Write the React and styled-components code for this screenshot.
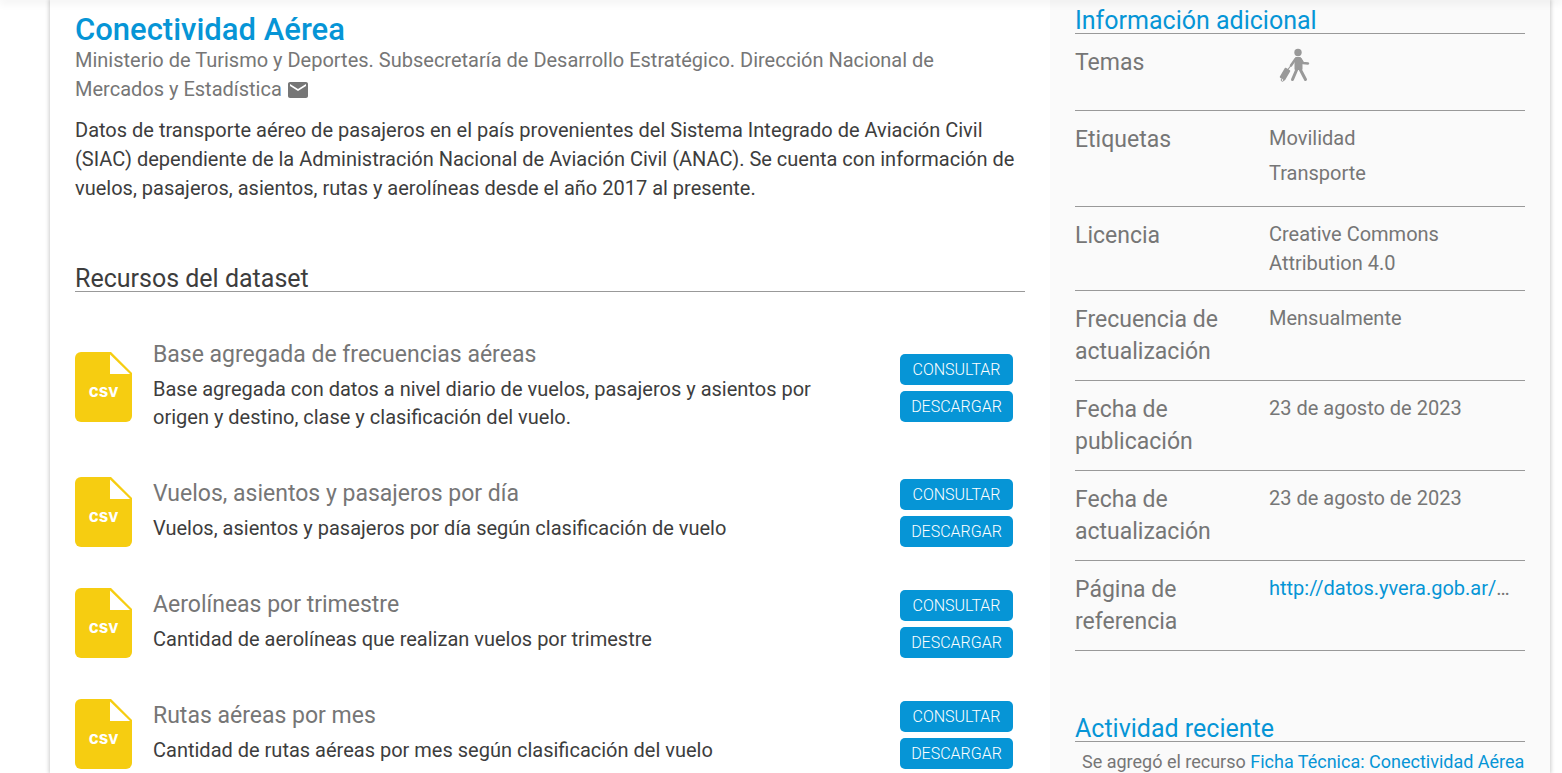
import React from "react";
import styled, { createGlobalStyle } from "styled-components";
import { MdEmail } from "react-icons/md";

const blue = "#0695d6";
const grey = "#767676";

const GlobalStyle = createGlobalStyle`
  * { box-sizing: border-box; }
  body {
    margin: 0;
    background: #fff;
    color: #3d3d3d;
    font: 400 20px/29px Roboto, "Liberation Sans", sans-serif;
    overflow-x: hidden;
  }
  h1, h2, h3, p, ul, dl, dd, dt { margin: 0; padding: 0; font-weight: 400; }
  ul { list-style: none; }
  a { color: ${blue}; text-decoration: none; }
`;

const TopBar = styled.header`
  position: relative;
  z-index: 1;
  height: 0;
  box-shadow: 0 0 10px 1px rgba(0, 0, 0, 0.2);
`;

const Page = styled.div`
  display: grid;
  grid-template-columns: minmax(0, 2fr) minmax(0, 1fr);
  margin: 0 12px 0 50px;
  height: 100vh;
  overflow: hidden;
  box-shadow: 0 0 4px 1px rgba(0, 0, 0, 0.2);
`;

const Main = styled.main`
  padding: 14px 25px 0;
`;

const Title = styled.h1`
  color: ${blue};
  font-size: 31px;
  font-weight: 500;
  line-height: 32px;
`;

const Publisher = styled.p`
  color: ${grey};
`;

const MailLink = styled.a`
  display: inline-flex;
  vertical-align: middle;
  margin-left: 4px;
  padding-bottom: 2px;
  color: ${grey};
`;

const Description = styled.p`
  margin-top: 12px;
  padding-right: 6px;
  margin-right: -6px;
`;

const SectionTitle = styled.h2`
  border-bottom: 1px solid #999;
  color: ${(p) => (p.$accent ? blue : "inherit")};
  font-size: 25px;
  line-height: 24px;
  margin-top: ${(p) => p.$gap || 0}px;
`;

const Resources = styled.ul`
  margin-top: 26px;
`;

const Resource = styled.li`
  display: flex;
  align-items: center;
`;

const FileIcon = styled.svg`
  display: block;
  flex: none;
  width: 57px;
  height: 70px;
  margin-bottom: 2px;
`;

const ResourceText = styled.div`
  flex: 1;
  padding: 21px 60px 26px 21px;
  line-height: 28px;
`;

const ResourceTitle = styled.h3`
  color: ${grey};
  font-size: 23px;
  line-height: 32px;
  margin-bottom: 4px;
`;

const Actions = styled.div`
  display: grid;
  gap: 6px;
  width: 113px;
  margin-right: 12px;
`;

const Action = styled.button`
  height: 31px;
  padding: 0;
  border: 0;
  border-radius: 5px;
  background: ${blue};
  color: #fff;
  font: 300 16px/31px Roboto, "Liberation Sans", sans-serif;
  text-transform: uppercase;
`;

const Sidebar = styled.aside`
  padding: 9px 25px 0;
  background: #fafafa;
`;

const InfoRow = styled.div`
  display: grid;
  grid-template-columns: 194px minmax(0, 1fr);
  padding: 13px 0 12px;
  border-bottom: 1px solid #999;
  color: ${grey};
`;

const Label = styled.dt`
  font-size: 23px;
  line-height: 32px;
  padding-right: 30px;
`;

const Value = styled.dd`
  padding-right: 6px;
`;

const Tag = styled.li`
  margin-bottom: 6px;
`;

const ThemeIcon = styled.svg`
  display: block;
  width: 50px;
  height: 51px;
`;

const Activity = styled.p`
  padding: 5px 0 5px 7px;
  color: ${grey};
  font-size: 18px;
`;

const resources = [
  ["Base agregada de frecuencias aéreas", "Base agregada con datos a nivel diario de vuelos, pasajeros y asientos por origen y destino, clase y clasificación del vuelo."],
  ["Vuelos, asientos y pasajeros por día", "Vuelos, asientos y pasajeros por día según clasificación de vuelo"],
  ["Aerolíneas por trimestre", "Cantidad de aerolíneas que realizan vuelos por trimestre"],
  ["Rutas aéreas por mes", "Cantidad de rutas aéreas por mes según clasificación del vuelo"],
];

function CsvIcon() {
  return (
    <FileIcon viewBox="0 0 57 70">
      <path d="M6 0H36L57 21V64a6 6 0 0 1-6 6H6a6 6 0 0 1-6-6V6a6 6 0 0 1 6-6Z" fill="#f6cd11" />
      <path d="M35 2.5V22H55Z" fill="#fff" />
      <text x="28.5" y="45" textAnchor="middle" fill="#fff" fontFamily="Inter, sans-serif" fontWeight="700" fontSize="17">csv</text>
    </FileIcon>
  );
}

function TravelerIcon() {
  return (
    <ThemeIcon viewBox="0 0 50 51" fill="none" stroke="#999" strokeLinecap="round" strokeLinejoin="round">
      <circle cx="29" cy="5.5" r="3.7" fill="#999" stroke="none" />
      <path d="M27 11h4l1.500 3v8h-6v-8z" fill="#999" strokeWidth="2" />
      <path d="M26.500 12L22 18.500M31.500 12l2.500 4 5 .500" strokeWidth="2.500" />
      <path d="M28 22L23.500 32.500M31 22l5.500 10.500" strokeWidth="3" />
      <path d="M22 18.500L18.500 23" strokeWidth="1.200" />
      <path d="M16.500 21.500l4 2.500-5 8.500-4-2.500z" fill="#999" strokeWidth="1.500" />
      <circle cx="13.500" cy="33" r="1.300" fill="#fafafa" strokeWidth="1" />
    </ThemeIcon>
  );
}

function Info({ label, children }) {
  return (
    <InfoRow>
      <Label>{label}</Label>
      <Value>{children}</Value>
    </InfoRow>
  );
}

export default function App() {
  return (
    <>
      <GlobalStyle />
      <TopBar />
      <Page>
        <Main>
          <Title>Conectividad Aérea</Title>
          <Publisher>
            Ministerio de Turismo y Deportes. Subsecretaría de Desarrollo Estratégico. Dirección Nacional de Mercados y Estadística
            <MailLink href="#contacto" aria-label="Contacto"><MdEmail size={24} /></MailLink>
          </Publisher>
          <Description>
            Datos de transporte aéreo de pasajeros en el país provenientes del Sistema Integrado de Aviación Civil (SIAC) dependiente de la Administración Nacional de Aviación Civil (ANAC). Se cuenta con información de vuelos, pasajeros, asientos, rutas y aerolíneas desde el año 2017 al presente.
          </Description>
          <SectionTitle $gap={64}>Recursos del dataset</SectionTitle>
          <Resources>
            {resources.map(([title, text]) => (
              <Resource key={title}>
                <CsvIcon />
                <ResourceText>
                  <ResourceTitle>{title}</ResourceTitle>
                  <p>{text}</p>
                </ResourceText>
                <Actions>
                  <Action>Consultar</Action>
                  <Action>Descargar</Action>
                </Actions>
              </Resource>
            ))}
          </Resources>
        </Main>
        <Sidebar>
          <SectionTitle $accent>Información adicional</SectionTitle>
          <dl>
            <Info label="Temas"><TravelerIcon /></Info>
            <Info label="Etiquetas">
              <ul>
                <Tag>Movilidad</Tag>
                <Tag>Transporte</Tag>
              </ul>
            </Info>
            <Info label="Licencia">Creative Commons Attribution 4.0</Info>
            <Info label="Frecuencia de actualización">Mensualmente</Info>
            <Info label="Fecha de publicación">23 de agosto de 2023</Info>
            <Info label="Fecha de actualización">23 de agosto de 2023</Info>
            <Info label="Página de referencia"><a href="http://datos.yvera.gob.ar/">http://datos.yvera.gob.ar/</a>…</Info>
          </dl>
          <SectionTitle $accent $gap={66}>Actividad reciente</SectionTitle>
          <Activity>
            Se agregó el recurso <a href="#ficha">Ficha Técnica: Conectividad Aérea</a>
          </Activity>
        </Sidebar>
      </Page>
    </>
  );
}
